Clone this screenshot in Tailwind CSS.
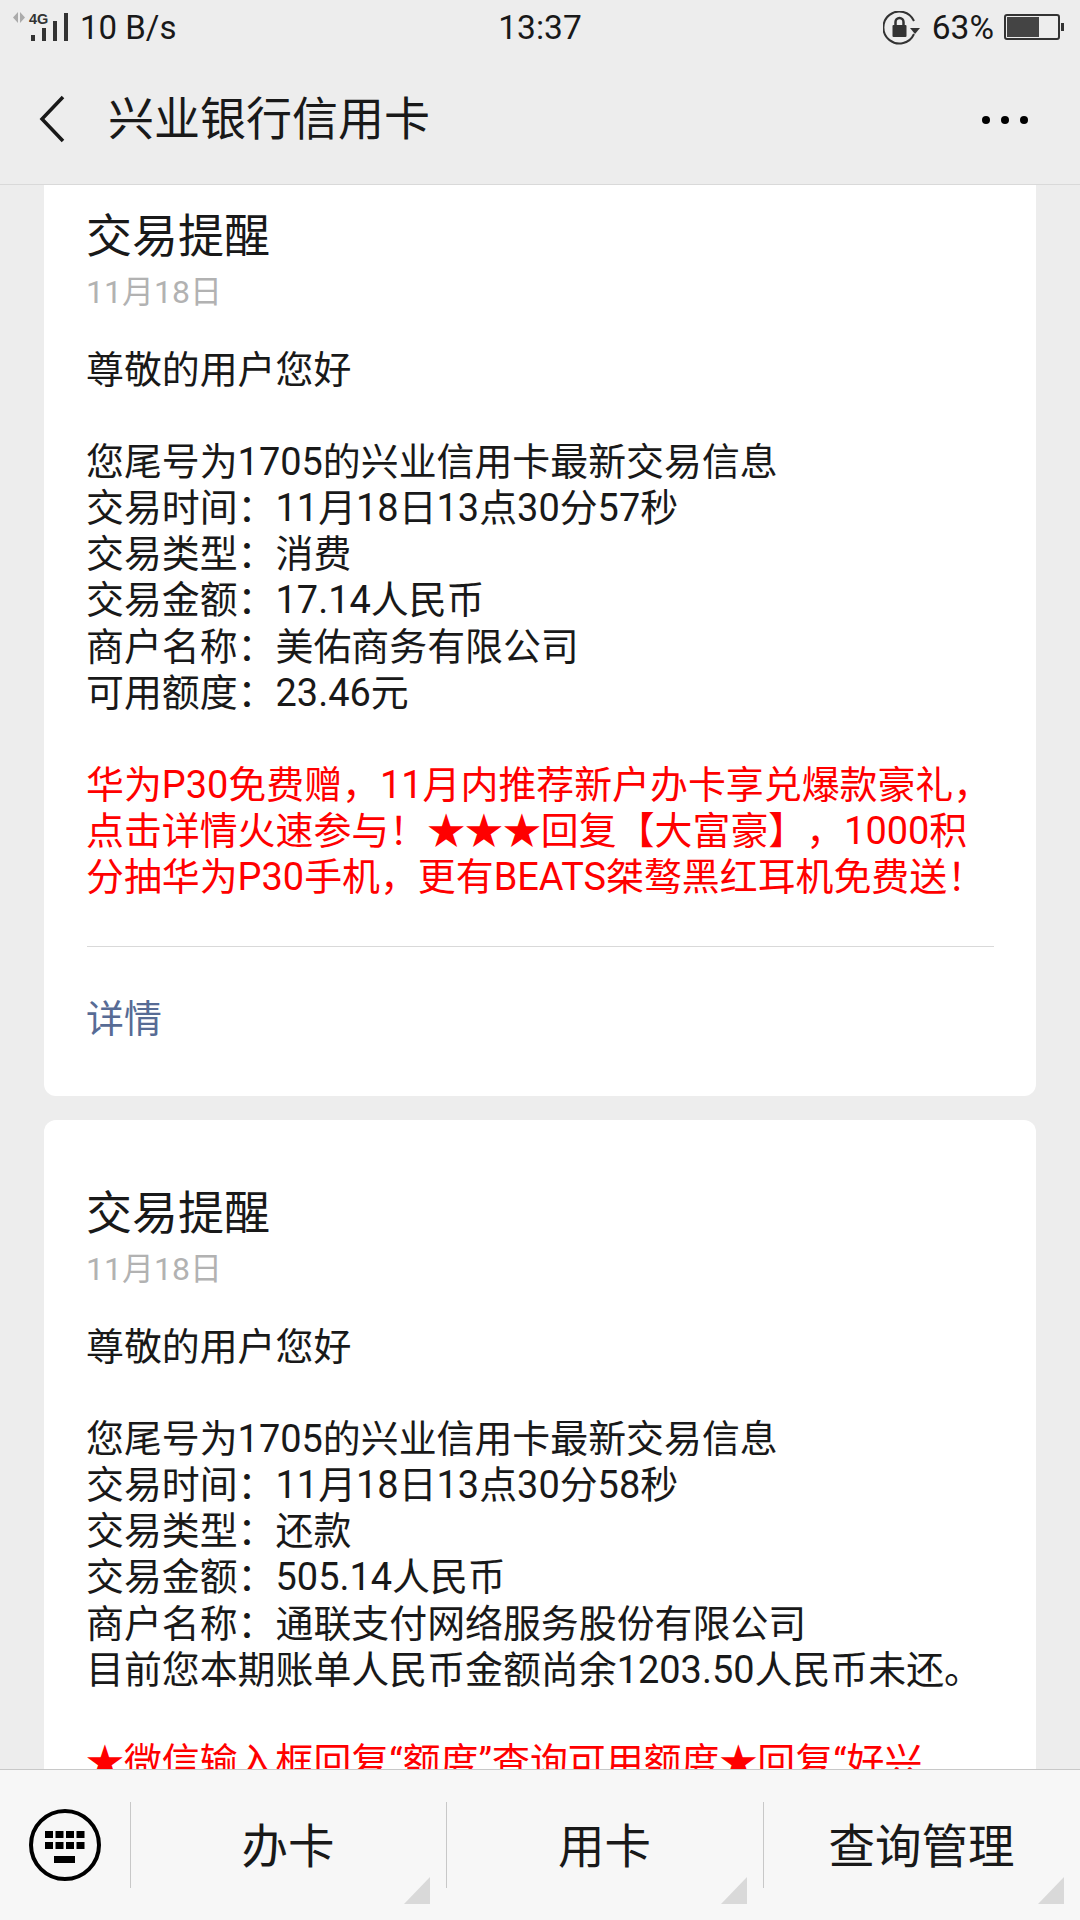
<!DOCTYPE html>
<html lang="zh-CN"><head><meta charset="utf-8">
<script src="https://cdn.jsdelivr.net/npm/@tailwindcss/browser@4"></script>
</head>
<body class="m-0 bg-[#ededed]">
<div class="w-[1080px] h-[1920px] flex flex-col overflow-hidden bg-[#ededed] text-[#191919] font-['Roboto','Noto_Sans_CJK_SC',sans-serif] [text-spacing-trim:space-all]">
  <!-- status bar -->
  <div class="h-[56px] shrink-0 relative flex items-center justify-between pr-[16px]">
    <div class="flex items-center">
      <svg width="70" height="56" viewBox="0 0 70 56">
        <path d="M18 12v11l-5-5.500zM20 12v11l5-5.500z" fill="#ababab"/>
        <text x="29" y="24" font-family="Liberation Sans" font-weight="700" font-size="14.500" fill="#333">4G</text>
        <rect x="31" y="35" width="4" height="6" fill="#333"/><rect x="42" y="28" width="4" height="13" fill="#333"/><rect x="53" y="21" width="4" height="20" fill="#333"/><rect x="64" y="13" width="4" height="28" fill="#333"/>
      </svg>
      <span class="text-[33px] leading-none ml-[10px] mt-[-1px]">10 B/s</span>
    </div>
    <span class="absolute left-0 right-0 text-center text-[33.500px] leading-none mt-[-1px]">13:37</span>
    <div class="flex items-center">
      <svg width="38" height="34" viewBox="0 0 38 34" class="mt-[-1px]">
        <path d="M31 23A16 16 0 1 1 31 10" fill="none" stroke="#333" stroke-width="2"/>
        <path d="M27 17h10l-5 6z" fill="#333"/>
        <rect x="9.500" y="14" width="14" height="12" rx="1" fill="#333"/>
        <path d="M12.500 14v-3a4 4 0 0 1 8 0v3" fill="none" stroke="#333" stroke-width="2.500"/>
      </svg>
      <span class="text-[33.500px] leading-none ml-[11px] mt-[-1px]">63%</span>
      <div class="ml-[10px] flex items-center mt-[-2px]">
        <div class="w-[56px] h-[26px] border-2 border-[#333] rounded-[3px] p-px"><div class="w-[32px] h-full bg-[#444]"></div></div>
        <div class="w-[3px] h-[8px] bg-[#333] ml-px"></div>
      </div>
    </div>
  </div>
  <!-- title bar -->
  <div class="h-[129px] shrink-0 relative z-10 flex items-center bg-[#ededed] border-b border-[#d9d9d9]">
    <svg width="26" height="48" viewBox="0 0 26 48" class="ml-[39px] mt-[-2px]"><path d="M24 2L3 24l21 22" fill="none" stroke="#191919" stroke-width="3.500"/></svg>
    <span class="ml-[43px] text-[46px] leading-none mt-[-2px]">兴业银行信用卡</span>
    <div class="ml-auto mr-[52px] flex gap-[11px]">
      <i class="block w-2 h-2 rounded-full bg-black"></i><i class="block w-2 h-2 rounded-full bg-black"></i><i class="block w-2 h-2 rounded-full bg-black"></i>
    </div>
  </div>
  <!-- messages -->
  <div class="flex-1 min-h-0 overflow-hidden px-[44px]">
    <div class="mt-[-42px] flex flex-col gap-[24px]">
      <article class="bg-white rounded-[12px] pt-[66px] pl-[42px] pr-[43px] h-[953px]">
        <h2 class="text-[46px] leading-[54px] font-normal">交易提醒</h2>
        <p class="text-[32px] leading-[40px] mt-[9px] text-[#b2b2b2]">11月18日</p>
        <div class="mt-[35px] text-[37.920px] leading-[46.100px]">
          <p>尊敬的用户您好</p>
          <p>&nbsp;</p>
          <p>您尾号为1705的兴业信用卡最新交易信息</p>
          <p>交易时间：11月18日13点30分57秒</p>
          <p>交易类型：消费</p>
          <p>交易金额：17.14人民币</p>
          <p>商户名称：美佑商务有限公司</p>
          <p>可用额度：23.46元</p>
          <p>&nbsp;</p>
          <p class="text-[#ff0000] whitespace-nowrap">华为P30免费赠，11月内推荐新户办卡享兑爆款豪礼，</p>
          <p class="text-[#ff0000] whitespace-nowrap">点击详情火速参与！★★★回复【大富豪】，1000积</p>
          <p class="text-[#ff0000] whitespace-nowrap">分抽华为P30手机，更有BEATS桀骜黑红耳机免费送！</p>
        </div>
        <div class="mt-[46px] ml-px h-px w-[907px] bg-[#d9d9d9]"></div>
        <p class="mt-[49px] text-[37.920px] leading-[46px] text-[#576b95]">详情</p>
      </article>
      <article class="bg-white rounded-[12px] pt-[66px] pl-[42px] pr-[43px] h-[1000px]">
        <h2 class="text-[46px] leading-[54px] font-normal">交易提醒</h2>
        <p class="text-[32px] leading-[40px] mt-[9px] text-[#b2b2b2]">11月18日</p>
        <div class="mt-[35px] text-[37.920px] leading-[46.100px]">
          <p>尊敬的用户您好</p>
          <p>&nbsp;</p>
          <p>您尾号为1705的兴业信用卡最新交易信息</p>
          <p>交易时间：11月18日13点30分58秒</p>
          <p>交易类型：还款</p>
          <p>交易金额：505.14人民币</p>
          <p>商户名称：通联支付网络服务股份有限公司</p>
          <p>目前您本期账单人民币金额尚余1203.50人民币未还。</p>
          <p>&nbsp;</p>
          <p class="text-[#ff0000] whitespace-nowrap">★微信输入框回复“额度”查询可用额度★回复“好兴</p>
        </div>
      </article>
    </div>
  </div>
  <!-- bottom menu -->
  <div class="h-[151px] shrink-0 relative z-10 flex bg-[#f7f7f7] border-t border-[#c8c8c8]">
    <div class="w-[130px] flex items-start pt-[39px] pl-[29px]">
      <svg width="72" height="72" viewBox="0 0 72 72">
        <circle cx="36" cy="36" r="34" fill="none" stroke="#000" stroke-width="4"/>
        <g fill="#000">
          <rect x="16" y="22" width="8" height="7"/><rect x="26.500" y="22" width="8" height="7"/><rect x="37" y="22" width="8" height="7"/><rect x="47.500" y="22" width="8" height="7"/>
          <rect x="16" y="33" width="8" height="7"/><rect x="26.500" y="33" width="8" height="7"/><rect x="37" y="33" width="8" height="7"/><rect x="47.500" y="33" width="8" height="7"/>
          <rect x="25" y="47" width="21" height="7"/>
        </g>
      </svg>
    </div>
    <div class="w-[316px] relative flex items-center justify-center pt-[5px] text-[46.500px]">
      <i class="absolute left-0 top-[32px] h-[86px] w-px bg-[#c8c8c8]"></i><span>办卡</span>
      <i class="absolute right-[16px] top-[107px] w-[26px] h-[27px] bg-[#d9d9d9] [clip-path:polygon(100%_0,100%_100%,0_100%)]"></i>
    </div>
    <div class="w-[317px] relative flex items-center justify-center pt-[5px] text-[46.500px]">
      <i class="absolute left-0 top-[32px] h-[86px] w-px bg-[#c8c8c8]"></i><span>用卡</span>
      <i class="absolute right-[16px] top-[107px] w-[26px] h-[27px] bg-[#d9d9d9] [clip-path:polygon(100%_0,100%_100%,0_100%)]"></i>
    </div>
    <div class="flex-1 relative flex items-center justify-center pt-[5px] text-[46.500px]">
      <i class="absolute left-0 top-[32px] h-[86px] w-px bg-[#c8c8c8]"></i><span>查询管理</span>
      <i class="absolute right-[16px] top-[107px] w-[26px] h-[27px] bg-[#d9d9d9] [clip-path:polygon(100%_0,100%_100%,0_100%)]"></i>
    </div>
  </div>
</div>
</body></html>
